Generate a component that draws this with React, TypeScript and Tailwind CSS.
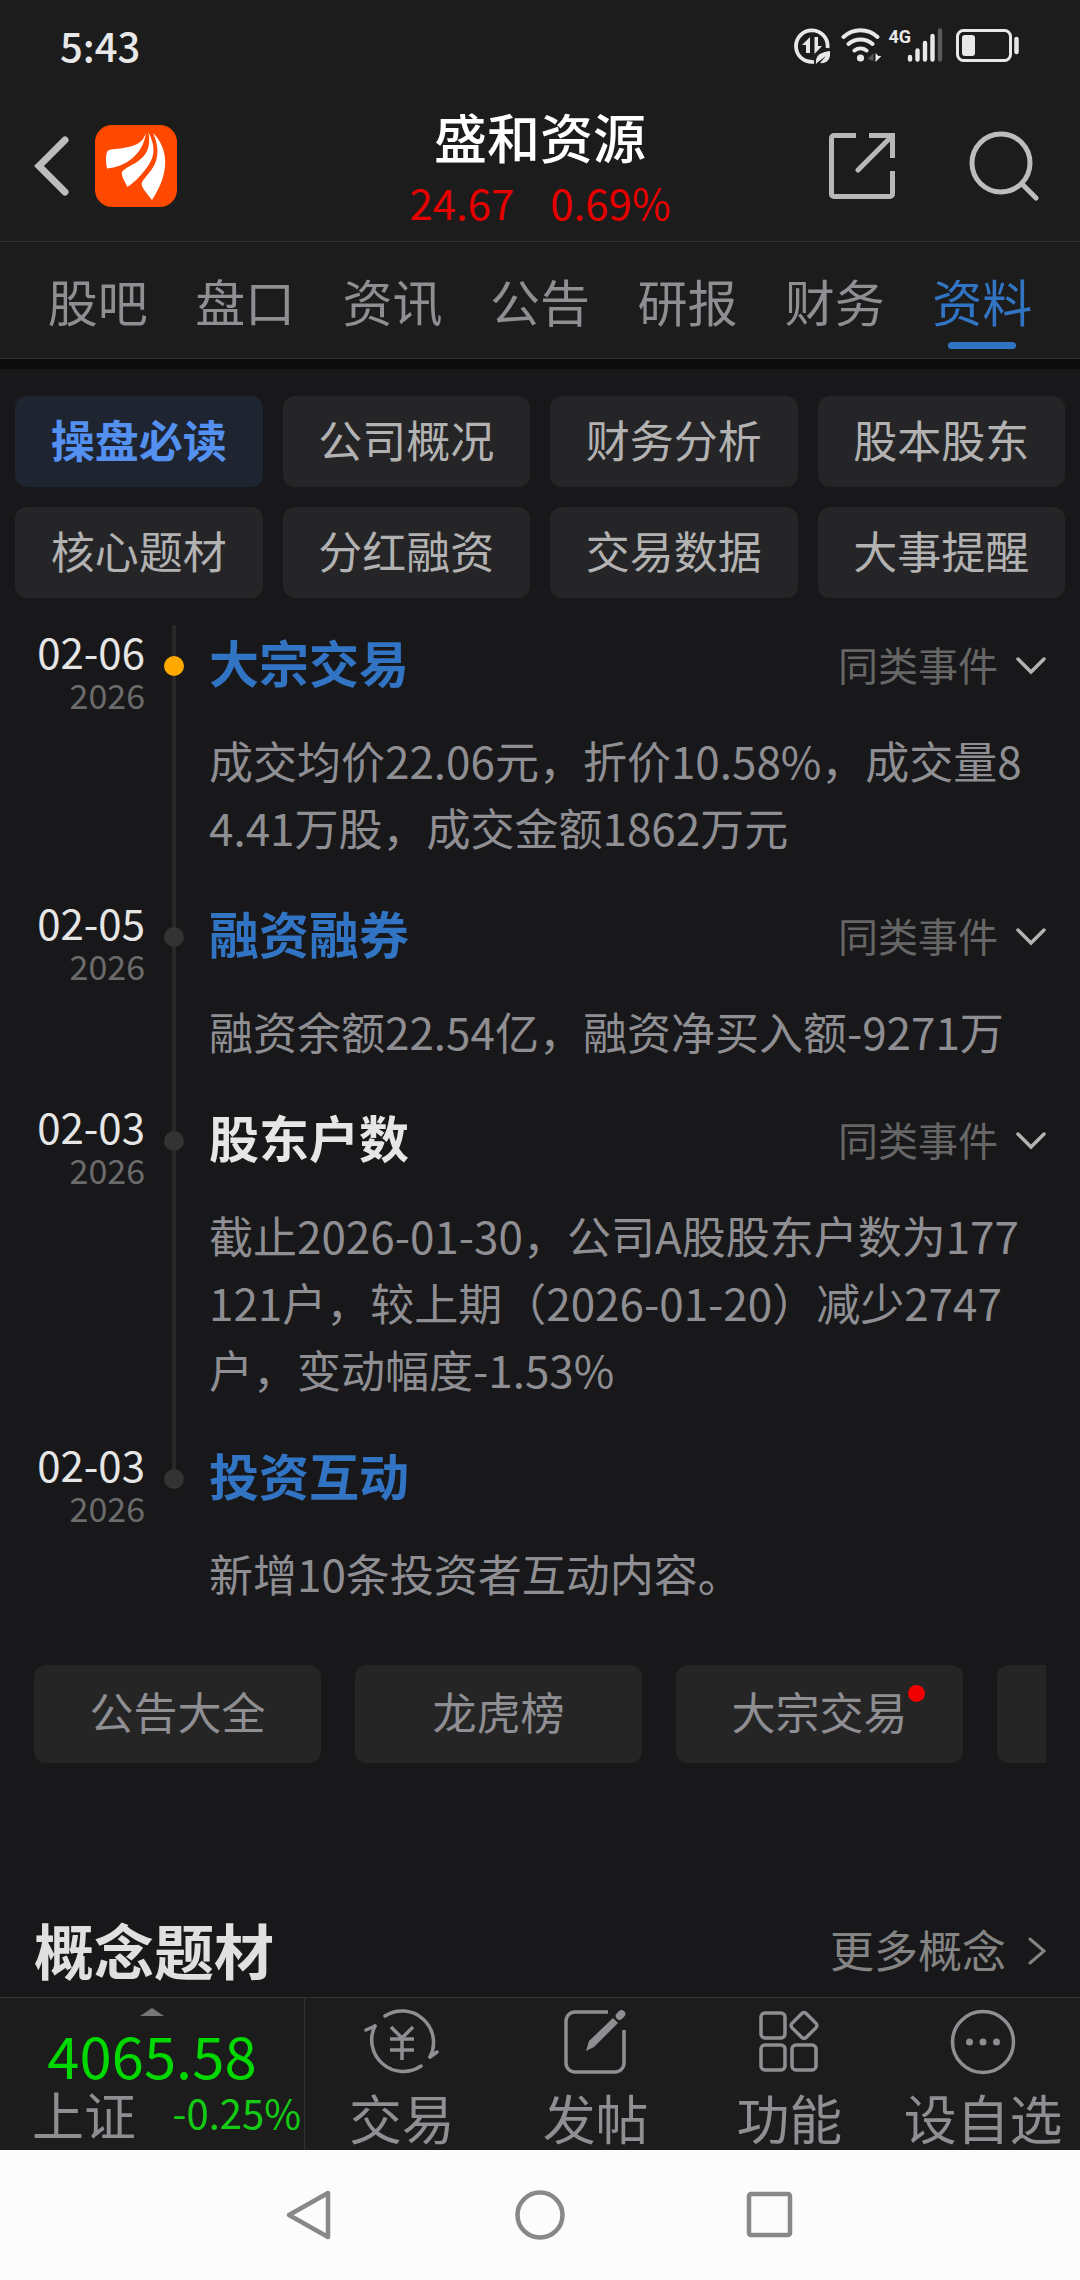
import type { ReactNode } from 'react'

const tabs = ['股吧', '盘口', '资讯', '公告', '研报', '财务', '资料']

const sections = ['操盘必读', '公司概况', '财务分析', '股本股东', '核心题材', '分红融资', '交易数据', '大事提醒']

const shortcuts = [
  { label: '公告大全' },
  { label: '龙虎榜' },
  { label: '大宗交易', unread: true },
  { label: '' },
]

type TimelineEvent = {
  date: string
  year: string
  title: string
  text: string
  link?: boolean
  similar?: boolean
}

const events: TimelineEvent[] = [
  {
    date: '02-06',
    year: '2026',
    title: '大宗交易',
    text: '成交均价22.06元，折价10.58%，成交量84.41万股，成交金额1862万元',
    link: true,
    similar: true,
  },
  {
    date: '02-05',
    year: '2026',
    title: '融资融券',
    text: '融资余额22.54亿，融资净买入额-9271万',
    link: true,
    similar: true,
  },
  {
    date: '02-03',
    year: '2026',
    title: '股东户数',
    text: '截止2026-01-30，公司A股股东户数为177121户，较上期（2026-01-20）减少2747户，变动幅度-1.53%',
    similar: true,
  },
  {
    date: '02-03',
    year: '2026',
    title: '投资互动',
    text: '新增10条投资者互动内容。',
    link: true,
  },
]

function StatusBar() {
  return (
    <div className="flex h-[92px] items-center justify-between px-[60px] text-[#e8e8e8]">
      <span className="pb-[2px] text-[40px] leading-none font-medium">5:43</span>
      <div className="flex items-center">
        {/* data saver */}
        <svg className="mr-[11px] size-9" viewBox="0 0 36 36" fill="currentColor">
          <path d="M20 33.8A15.800 15.800 0 1 1 33.500 20" fill="none" stroke="currentColor" strokeWidth="3.800" />
          <path d="M16 9v16h-4v-8H8zM20.500 9h3.500v9h4l-7.500 8z" />
          <path d="M22 36c-1-8 4-12 14-13 1 8-3 13-10 12l6-7-8 6z" />
        </svg>
        {/* wifi */}
        <svg className="mr-[7px] h-9 w-10" viewBox="0 0 40 36" fill="none" stroke="currentColor" strokeWidth="4" strokeLinecap="round">
          <path d="M2.500 9a25 25 0 0 1 34 0M7.500 16a18 18 0 0 1 24 0M13.500 22.500a10 10 0 0 1 12 0" />
          <circle cx="19.500" cy="30" r="3.600" fill="currentColor" stroke="none" />
          <path d="M26.500 31l6-6v8z" fill="#555" stroke="none" />
          <path d="M34.500 25v9l6-6h-3z" fill="currentColor" stroke="none" />
        </svg>
        <span className="self-start font-['Roboto'] text-[18px] leading-[18px] font-bold">4G</span>
        {/* signal */}
        <svg className="mr-[13px] -ml-1 h-9 w-9" viewBox="0 0 36 36" stroke="currentColor" strokeWidth="4.400" strokeLinecap="round">
          <path d="M3 29v2.500M10.500 22.500v9M18 15v16.500M25.500 8v23.500" />
          <path d="M33 2.500v29" stroke="#5a5a5a" />
        </svg>
        {/* battery */}
        <svg className="h-9 w-16" viewBox="0 0 64 36" fill="none" stroke="currentColor">
          <rect x="1.500" y="2.500" width="53" height="30" rx="6" strokeWidth="3" />
          <rect x="6" y="7" width="13" height="21" rx="3" fill="currentColor" stroke="none" />
          <path d="M60.500 11v13" strokeWidth="4.500" strokeLinecap="round" />
        </svg>
      </div>
    </div>
  )
}

function Header() {
  return (
    <header className="grid h-[150px] grid-cols-3 items-center border-b border-[#333333] px-[34px]">
      <div className="flex items-center gap-[26px] pb-[2px]">
        <button type="button" aria-label="返回">
          <svg className="h-[62px] w-[35px]" viewBox="0 0 35 62" fill="none" stroke="#bdbdbd" strokeWidth="7" strokeLinecap="round">
            <path d="M31 5L5 31l26 26" />
          </svg>
        </button>
        <svg className="size-[82px]" viewBox="0 0 82 82" fill="#fff">
          <rect width="82" height="82" rx="17" fill="#ff4800" />
          <path d="M51 8C48 16 44 20 31 22.500C24 24 16 24 13 25.500C10 29 11 37 12 43.500C30 42 48 30 51 8z" />
          <path d="M53.500 7.500C62 24 59 34 50 45C45 52 38 58 32.500 62C30 57 26 51 27 47C30 43 37 40 42 37C52 30 56 22 53.500 7.500z" />
          <path d="M58 8C74 24 75 48 57 75C52 68 45 62 47 57C50 52 58 45 61 36C64 26 62 17 58 8z" />
        </svg>
      </div>
      <div className="flex flex-col items-center pt-2">
        <h1 className="text-[53px] leading-[62px] font-medium text-white">盛和资源</h1>
        <p className="flex gap-9 text-[42px] leading-[70px] text-[#e60000]">
          <span>24.67</span>
          <span>0.69%</span>
        </p>
      </div>
      <div className="flex items-center justify-end gap-[74px] pr-[7px] pb-[2px]">
        <button type="button" aria-label="分享">
          <svg className="size-[66px]" viewBox="0 0 66 66" fill="none" stroke="#b8b8b8" strokeWidth="5">
            <path d="M27 2.500H5a2.500 2.500 0 0 0-2.500 2.500v56a2.500 2.500 0 0 0 2.500 2.500h56a2.500 2.500 0 0 0 2.500-2.500V38" />
            <path d="M40 2.500h23.500V25" />
            <path d="M63 3L29 37" strokeLinecap="round" />
          </svg>
        </button>
        <button type="button" aria-label="搜索">
          <svg className="size-[70px]" viewBox="0 0 70 70" fill="none" stroke="#bdbdbd" strokeWidth="5" strokeLinecap="round">
            <circle cx="32" cy="32" r="29" />
            <path d="M53 53l14 14" />
          </svg>
        </button>
      </div>
    </header>
  )
}

function Tabs() {
  return (
    <nav className="flex h-[117px] border-b border-[#333333] px-6">
      {tabs.map((tab) => {
        const active = tab === '资料'
        return (
          <a
            key={tab}
            href="#"
            className={`relative flex flex-1 items-center justify-center text-[50px] leading-[60px] ${active ? 'text-[#3274c4]' : 'text-[#8e8e93]'}`}
          >
            {tab}
            {active && <span className="absolute bottom-[9px] left-1/2 h-[7px] w-[68px] -translate-x-1/2 rounded-full bg-[#3274c4]" />}
          </a>
        )
      })}
    </nav>
  )
}

function SectionGrid() {
  return (
    <div className="grid grid-cols-4 gap-5 px-[15px] pt-[27px]">
      {sections.map((name, i) => (
        <button
          key={name}
          type="button"
          className={`h-[91px] rounded-xl pb-[6px] text-[44px] leading-none ${i === 0 ? 'bg-[#1e2430] font-bold text-[#5490f0]' : 'bg-[#252527] text-[#b2b2b2]'}`}
        >
          {name}
        </button>
      ))}
    </div>
  )
}

function EventItem({ event, first, last }: { event: TimelineEvent; first: boolean; last: boolean }) {
  return (
    <li className="flex">
      <div className="w-[111px] shrink-0 pt-1 text-right leading-[44px]">
        <div className="text-[42px] text-[#e6e6e6]">{event.date}</div>
        <div className="text-[34px] text-[#6b6b6b]">{event.year}</div>
      </div>
      <div className="relative w-[58px] shrink-0">
        <span className={`absolute top-0 left-[27px] w-1 bg-[#282828] ${last ? 'h-[41px]' : 'h-full'}`} />
        <span className={`absolute top-[31px] left-[19px] size-5 rounded-full ${first ? 'bg-[#ffa800]' : 'bg-[#333333]'}`} />
      </div>
      <div className="ml-[6px] flex-1 pb-[35px]">
        <div className="mb-5 flex h-[82px] items-center justify-between">
          <h2 className={`pb-[10px] text-[50px] leading-[60px] font-bold ${event.link ? 'text-[#3274c4]' : 'text-[#e6e6e6]'}`}>
            {event.title}
          </h2>
          {event.similar && (
            <button type="button" className="flex items-center gap-[18px] pb-1 text-[40px] leading-none text-[#666666]">
              同类事件
              <svg className="mt-1 h-[18px] w-[30px]" viewBox="0 0 30 18" fill="none" stroke="#b3b3b3" strokeWidth="3.500" strokeLinecap="round">
                <path d="M2 2l13 13L28 2" />
              </svg>
            </button>
          )}
        </div>
        <p className="mr-1 text-[44px] leading-[67px] break-all text-[#8e8e93]">{event.text}</p>
      </div>
    </li>
  )
}

function ToolItem({ label, children }: { label: string; children: ReactNode }) {
  return (
    <button type="button" className="flex flex-1 flex-col items-center gap-[10px] pt-[9px] text-[53px] leading-[64px] text-[#8e8e93]">
      <svg className="h-[68px] w-[76px]" viewBox="0 0 76 68" fill="none" stroke="currentColor" strokeWidth="3.500">
        {children}
      </svg>
      {label}
    </button>
  )
}

function BottomBar() {
  return (
    <div className="flex h-[153px] border-t border-[#333333] bg-[#1c1c1c]">
      <button type="button" className="flex w-[305px] shrink-0 flex-col items-center border-r border-[#333333] pt-[10px]">
        <svg className="h-2 w-6 shrink-0" viewBox="0 0 24 8">
          <path d="M12 0l12 8H0z" fill="#77777a" />
        </svg>
        <span className="mt-2 text-[58px] leading-[60px] text-[#00d800]">4065.58</span>
        <span className="flex w-full items-center justify-between pr-[3px] pl-8 leading-[56px]">
          <span className="text-[52px] text-[#8e8e93]">上证</span>
          <span className="pb-1 text-[40px] text-[#14cc14]">-0.25%</span>
        </span>
      </button>
      <ToolItem label="交易">
        <path d="M21 9A31.500 31.500 0 0 1 66 50M57 59A31.500 31.500 0 0 1 11 19" strokeLinecap="round" />
        <path d="M2 23l9-4M66 50l7-5" strokeLinecap="round" />
        <path d="M27 20l11 11 11-11M38 31v22M26 32h24M26 43h24" />
      </ToolItem>
      <ToolItem label="发帖">
        <path d="M50 5H17a9 9 0 0 0-9 9v42a9 9 0 0 0 9 9h40a9 9 0 0 0 9-9V23" />
        <path d="M28 44l3-10 24-23 5 5-24 24z" fill="currentColor" stroke="none" />
        <path d="M61.500 9l2-2" strokeWidth="7.500" strokeLinecap="round" />
      </ToolItem>
      <ToolItem label="功能">
        <rect x="10" y="6" width="24" height="25" rx="4" />
        <rect x="10" y="38" width="24" height="25" rx="4" />
        <rect x="41" y="38" width="24" height="25" rx="4" />
        <rect x="43" y="8.500" width="20" height="20" rx="3" transform="rotate(45 53 18.500)" />
      </ToolItem>
      <ToolItem label="设自选">
        <circle cx="38" cy="35" r="30.500" />
        <g fill="currentColor" stroke="none">
          <circle cx="24.500" cy="35" r="3.500" />
          <circle cx="38" cy="35" r="3.500" />
          <circle cx="51.500" cy="35" r="3.500" />
        </g>
      </ToolItem>
    </div>
  )
}

function SystemNav() {
  return (
    <div className="flex h-[130px] items-center justify-center gap-[178px] bg-[#fcfcfc]">
      <button type="button" aria-label="后退">
        <svg className="size-[52px]" viewBox="0 0 52 52" fill="none" stroke="#888" strokeWidth="4.500" strokeLinejoin="round">
          <path d="M44 4v44L5 26z" />
        </svg>
      </button>
      <button type="button" aria-label="主页">
        <svg className="size-[52px]" viewBox="0 0 52 52" fill="none" stroke="#888" strokeWidth="4.500">
          <circle cx="26" cy="26" r="22.500" />
        </svg>
      </button>
      <button type="button" aria-label="最近任务">
        <svg className="size-[52px]" viewBox="0 0 52 52" fill="none" stroke="#888" strokeWidth="4.500">
          <rect x="5" y="5" width="41" height="41" rx="2" />
        </svg>
      </button>
    </div>
  )
}

export default function App() {
  return (
    <div className="flex min-h-screen flex-col bg-[#18181a] font-['Noto_Sans_CJK_SC',sans-serif]">
      <div className="bg-[#1c1c1c]">
        <StatusBar />
        <Header />
        <Tabs />
      </div>
      <div className="h-[10px] bg-[#0b0b0b]" />

      <main className="flex-1">
        <SectionGrid />

        <ul className="mt-[27px] px-[34px]">
          {events.map((event, i) => (
            <EventItem key={event.title} event={event} first={i === 0} last={i === events.length - 1} />
          ))}
        </ul>

        <div className="mx-[34px] mt-[23px] flex gap-[34px] overflow-hidden">
          {shortcuts.map((item) => (
            <button
              key={item.label}
              type="button"
              className="flex h-[98px] w-[287px] shrink-0 items-center justify-center rounded-xl bg-[#252525] pb-[6px] text-[44px] leading-none text-[#8e8e93]"
            >
              <span className="relative">
                {item.label}
                {item.unread && <span className="absolute -top-1 left-full size-[17px] rounded-full bg-[#f00000]" />}
              </span>
            </button>
          ))}
        </div>

        <div className="mt-[142px] flex h-[92px] items-center justify-between px-[34px] pb-1">
          <h2 className="text-[60px] leading-none font-bold text-[#e0e0e0]">概念题材</h2>
          <a href="#" className="flex items-center gap-[22px] text-[44px] leading-none text-[#848484]">
            更多概念
            <svg className="mt-1 h-7 w-[18px]" viewBox="0 0 18 28" fill="none" stroke="#848484" strokeWidth="3" strokeLinecap="round">
              <path d="M2 2l14 12L2 26" />
            </svg>
          </a>
        </div>
      </main>

      <BottomBar />
      <SystemNav />
    </div>
  )
}
